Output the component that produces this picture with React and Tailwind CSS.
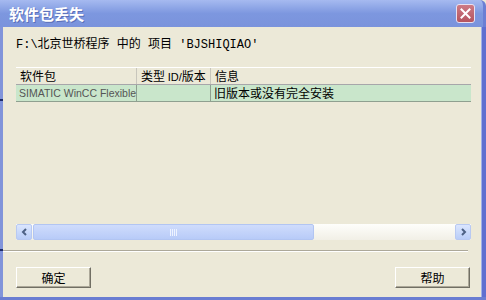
export default function App() {
  const mono = { fontFamily: '"Liberation Mono", "Noto Sans CJK SC", monospace' };
  const cjk = { fontFamily: '"Noto Sans CJK SC", "Liberation Sans", sans-serif' };
  return (
    <div className="w-[486px] h-[300px] overflow-hidden bg-[#ECE9D8] flex flex-col relative" style={cjk}>
      {/* title bar */}
      <div className="h-[27px] shrink-0 flex items-center justify-between pl-[9px] pr-[8px] rounded-tr-[6px] bg-gradient-to-b from-[#a6baf0] via-[#7d97df] to-[#7a93dc] border-r-[3px] border-[#6b7fd4]">
        <span className="text-white text-[15px] font-bold leading-none [text-shadow:1px_1px_0_#5a6fb8]">软件包丢失</span>
        <div className="w-[19px] h-[19px] rounded-[3px] border border-[#e8e0f0] bg-gradient-to-b from-[#cd7a85] to-[#b5545f] flex items-center justify-center">
          <svg width="11" height="11" viewBox="0 0 11 11">
            <path d="M1.5 1.5 L9.5 9.5 M9.5 1.5 L1.5 9.5" stroke="white" strokeWidth="2" strokeLinecap="square" />
          </svg>
        </div>
      </div>
      <div className="flex-1 flex min-h-0">
        {/* left border */}
        <div className="w-[3px] bg-[#8194da] shrink-0 flex flex-col">
          <div className="h-[72px]" />
          <div className="h-[2px] bg-[#1c2a6a]" />
          <div className="h-[148px]" />
          <div className="h-[2px] bg-[#1c2a6a]" />
        </div>
        <div className="flex-1 flex flex-col pl-[13px] pr-[10px] min-w-0">
          <div className="h-[40px] pt-[11px] text-[12px] leading-[14px] text-black whitespace-nowrap" style={mono}>
            F:\北京世桥程序 中的 项目 'BJSHIQIAO'
          </div>
          {/* list */}
          <div className="h-[173px] flex flex-col w-[455px]">
            <div className="h-[18px] border-t border-white border-b border-b-[#a7a6aa] flex text-[12px] leading-[16px] text-black">
              <div className="w-[121px] pl-[4px] border-r border-[#c8c6bc]">软件包</div>
              <div className="w-[74px] pl-[4px] border-r border-[#c8c6bc] whitespace-nowrap">类型 <span className="text-[11px]" style={{ fontFamily: '"Liberation Sans", sans-serif' }}>ID/</span>版本</div>
              <div className="flex-1 pl-[4px]">信息</div>
            </div>
            <div className="h-[17px] bg-[#c9e6cb] border-b border-[#8fa090] flex text-[12px] leading-[16px]">
              <div className="w-[121px] pl-[3px] border-r border-[#8fa090] text-[10.5px] text-[#555555] whitespace-nowrap overflow-hidden" style={{ fontFamily: '"Liberation Sans", sans-serif' }}>SIMATIC WinCC Flexible</div>
              <div className="w-[74px] border-r border-[#8fa090]" />
              <div className="flex-1 pl-[3px] text-black">旧版本或没有完全安装</div>
            </div>
            <div className="flex-1" />
            {/* scrollbar */}
            <div className="h-[16px] flex items-stretch bg-gradient-to-b from-[#fefefb] to-[#f1efe6]">
              <div className="w-[16px] rounded-[2px] border border-[#b8c9f2] bg-gradient-to-b from-[#dbe6fe] to-[#b9cdf8] flex items-center justify-center">
                <svg width="7" height="8" viewBox="0 0 7 8"><path d="M5 1 L2 4 L5 7" stroke="#4d6185" strokeWidth="2" fill="none" /></svg>
              </div>
              <div className="w-[281px] ml-[1px] rounded-[2px] border border-[#b2c5f2] bg-gradient-to-b from-[#cfdcfc] to-[#b8cbf8] flex items-center justify-center">
                <svg width="8" height="7" viewBox="0 0 8 7">
                  <path d="M0.5 0 V7 M2.5 0 V7 M4.5 0 V7 M6.5 0 V7" stroke="#eef3ff" strokeWidth="1" />
                </svg>
              </div>
              <div className="flex-1" />
              <div className="w-[16px] rounded-[2px] border border-[#b8c9f2] bg-gradient-to-b from-[#dbe6fe] to-[#b9cdf8] flex items-center justify-center">
                <svg width="7" height="8" viewBox="0 0 7 8"><path d="M2 1 L5 4 L2 7" stroke="#4d6185" strokeWidth="2" fill="none" /></svg>
              </div>
            </div>
          </div>
          {/* separator */}
          <div className="mt-[10px] h-[2px] border-t border-[#aca899] border-b border-b-white w-[465px] -ml-[13px]" />
          <div className="mt-[15px] flex justify-between w-[454px]">
            <button className="w-[75px] h-[21px] bg-[#ECE9D8] border border-t-white border-l-white border-r-[#716f64] border-b-[#716f64] shadow-[inset_-1px_-1px_0_#aca899] text-[12px] leading-[18px] text-black">确定</button>
            <button className="w-[75px] h-[21px] bg-[#ECE9D8] border border-t-white border-l-white border-r-[#716f64] border-b-[#716f64] shadow-[inset_-1px_-1px_0_#aca899] text-[12px] leading-[18px] text-black">帮助</button>
          </div>
        </div>
        {/* right border */}
        <div className="w-[5px] shrink-0 bg-[#5f6fd0] border-l border-[#9fb0e8]" />
      </div>
      <div className="h-[3px] shrink-0 bg-[#6a7dd2]" />
    </div>
  );
}
